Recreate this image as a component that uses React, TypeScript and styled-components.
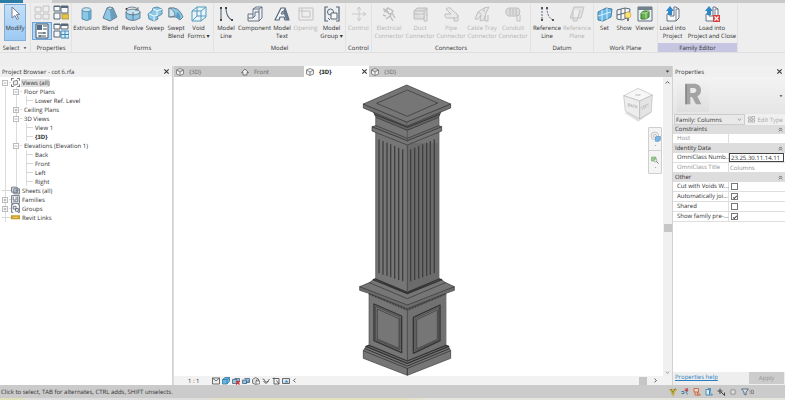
import React, { useState } from 'react';
import styled, { createGlobalStyle } from 'styled-components';

const GlobalStyle = createGlobalStyle`
  *, *::before, *::after { box-sizing: border-box; }
  body { margin: 0; background: #eeeeee; }
  body, button, input, select, table {
    font-family: "Open Sans", "Noto Sans", sans-serif;
    font-size: 6px;
    line-height: 8px;
    color: #303030;
    text-rendering: geometricPrecision;
  }
  button { padding: 0; border: 0; background: none; white-space: nowrap; }
  ul { margin: 0; padding: 0; list-style: none; }
  svg { display: block; flex: none; }
`;

const Window = styled.div`
  display: flex;
  flex-direction: column;
  min-height: 100vh;
  overflow: hidden;
`;

/* Ribbon */

const TabStrip = styled.div`
  display: flex;
  height: 3px;
  background: #c9c9c9;
`;
const FileTab = styled.div`
  width: 23px;
  background: #2b7da6;
`;
const ActiveRibbonTab = styled.div`
  width: 29px;
  background: #e6e6e6;
`;
const Ribbon = styled.header`
  display: flex;
  height: 50px;
  border-bottom: 1px solid #e0e0e0;
  background: #eeeeee;
`;
const PanelBox = styled.section<{ $width: number }>`
  display: flex;
  flex-direction: column;
  flex: none;
  width: ${p => p.$width}px;
  border-right: 1px solid #e2e2e2;
`;
const PanelTools = styled.div`
  display: flex;
  flex: 1;
  justify-content: center;
  padding-top: 1px;
`;
const PanelTitle = styled.h2<{ $accent?: boolean }>`
  display: flex;
  align-items: center;
  justify-content: center;
  gap: 4px;
  height: 9px;
  margin: 0;
  font-size: 6px;
  line-height: 8px;
  font-weight: 400;
  background: ${p => (p.$accent ? '#c6c5e2' : 'transparent')};
`;
const Tool = styled.button<{ $width: number; $pressed?: boolean }>`
  display: flex;
  flex-direction: column;
  align-items: center;
  flex: none;
  gap: 2px;
  width: ${p => p.$width}px;
  height: 37px;
  padding-top: 2px;
  box-shadow: ${p => (p.$pressed ? 'inset 0 0 0 1px #7fb0dc' : 'none')};
  background: ${p => (p.$pressed ? 'linear-gradient(#c5dff8, #9cc9f2)' : 'none')};
  &:disabled { color: #b4b4b4; }
  &:disabled svg { filter: grayscale(1); opacity: 0.35; }
`;
const ToolLabel = styled.span`
  text-align: center;
  white-space: pre-line;
`;
const SmallTools = styled.div`
  display: grid;
  grid-template-columns: 20px 18px;
  grid-template-rows: 18px 18px;
`;
const SmallTool = styled.button<{ $pressed?: boolean }>`
  display: flex;
  align-items: center;
  justify-content: center;
  border: 1px solid ${p => (p.$pressed ? '#6ea3d8' : 'transparent')};
  background: ${p => (p.$pressed ? '#b5d6f5' : 'none')};
  &:disabled svg { filter: grayscale(1); opacity: 0.35; }
`;
const OptionsBar = styled.div`
  height: 13px;
  background: #eeeeee;
`;

/* Work area */

const WorkArea = styled.main`
  display: grid;
  flex: 1;
  grid-template-columns: 172px minmax(0, 1fr) 112px;
  column-gap: 1px;
  background: #d2d2d2;
`;
const Browser = styled.aside`
  display: flex;
  flex-direction: column;
  background: #ffffff;
`;
const PaneTitle = styled.header`
  display: flex;
  align-items: center;
  justify-content: space-between;
  height: 11px;
  padding: 0 2px;
  background: #f0f0f0;
`;
const CloseButton = styled.button`
  display: flex;
  margin-left: auto;
`;
const Tree = styled.ul`
  padding: 1px 0 0 2px;
`;
const treeIndent = [0, 11, 24];
const trunk = (x: number) => `linear-gradient(#dcdcdc, #dcdcdc) ${x}px 0 / 1px 100% no-repeat`;
const TreeRow = styled.li<{ $depth: number }>`
  display: flex;
  align-items: center;
  height: 9px;
  padding-left: ${p => treeIndent[p.$depth]}px;
  &:not(:first-child) {
    background: ${p => [trunk(3), p.$depth > 0 && trunk(14), p.$depth > 1 && trunk(24)].filter(Boolean).join(', ')};
  }
`;
const Toggle = styled.button`
  display: flex;
  width: 7px;
`;
const Branch = styled.span<{ $width: number }>`
  width: ${p => p.$width}px;
  height: 1px;
  background: #d6d6d6;
`;
const TreeLabel = styled.span<{ $selected?: boolean; $bold?: boolean }>`
  margin-left: 1px;
  padding: 0 1px;
  white-space: nowrap;
  font-weight: ${p => (p.$bold ? 700 : 400)};
  background: ${p => (p.$selected ? '#dedede' : 'transparent')};
`;

const Viewer = styled.section`
  display: flex;
  flex-direction: column;
  min-width: 0;
  background: #ffffff;
  border-left: 1px solid #dddddd;
`;
const ViewTabs = styled.nav`
  display: flex;
  height: 11px;
  background: #c9c9c9;
`;
const ViewTab = styled.div<{ $active?: boolean }>`
  display: flex;
  align-items: center;
  width: 65px;
  padding: 0 1px 0 2px;
  background: ${p => (p.$active ? '#ffffff' : '#c9c9c9')};
  & > button:first-child {
    display: flex;
    align-items: center;
    gap: 5px;
    color: ${p => (p.$active ? '#222222' : '#666666')};
    font-weight: ${p => (p.$active ? 700 : 400)};
  }
`;
const TabMenu = styled.button`
  display: flex;
  align-items: center;
  margin-left: auto;
  padding-right: 2px;
`;
const Stage = styled.div`
  display: flex;
  flex: 1;
`;
const Canvas = styled.div`
  position: relative;
  display: flex;
  flex: 1;
  justify-content: center;
  align-items: flex-end;
  padding-right: 23px;
`;
const ViewCube = styled.div`
  position: absolute;
  top: 10px;
  right: 9px;
`;
const NavigationBar = styled.div`
  position: absolute;
  top: 50px;
  right: 1px;
  display: flex;
  flex-direction: column;
  width: 14px;
  height: 47px;
  border: 1px solid #cfcfcf;
  border-radius: 1px;
  background: #f4f4f4;
`;
const NavButton = styled.button`
  display: flex;
  flex: 1;
  flex-direction: column;
  align-items: center;
  justify-content: center;
  gap: 2px;
  & + & { border-top: 1px solid #d2d2d2; }
`;
const ScrollTrack = styled.div`
  display: flex;
  flex-direction: column;
  align-items: center;
  justify-content: space-between;
  width: 9px;
  padding: 3px 0 1px;
  background: #f0f0f0;
`;
const ScrollThumb = styled.div`
  width: 8px;
  height: 8px;
  background: #c6c6c6;
`;
const ViewBar = styled.footer`
  display: flex;
  align-items: center;
  gap: 2px;
  height: 9px;
  padding: 0 14px 0 14px;
  background: #f2f2f2;
`;
const Scale = styled.button`
  width: 17px;
  margin-right: 5px;
  text-align: left;
`;
const HorizontalScroll = styled.div`
  display: flex;
  align-items: center;
  gap: 6px;
  margin-left: auto;
`;

/* Properties */

const Properties = styled.aside`
  display: flex;
  flex-direction: column;
  background: #ffffff;
`;
const Preview = styled.button`
  display: flex;
  align-items: center;
  justify-content: space-between;
  height: 37px;
  padding: 0 2px 0 4px;
  background: linear-gradient(#f3f3f3, #e5e5e5);
`;
const PreviewTile = styled.span`
  display: flex;
  justify-content: center;
  padding: 3px 0;
  width: 32px;
  height: 33px;
  background: linear-gradient(#f2f2f2, #dfdfdf);
`;
const TypeRow = styled.div`
  display: flex;
  align-items: center;
  justify-content: space-between;
  height: 11px;
  padding: 0 2px 0 1px;
  background: #f0f0f0;
`;
const FamilyPicker = styled.label`
  display: grid;
  align-items: center;
  width: 71px;
  height: 11px;
  border: 1px solid #cccccc;
  background: #e9e9e9;
  & > * { grid-area: 1 / 1; }
  & > svg { justify-self: end; margin-right: 2px; pointer-events: none; }
`;
const FamilySelect = styled.select`
  width: 100%;
  height: 9px;
  padding: 0 1px;
  border: 0;
  appearance: none;
  background: none;
`;
const EditType = styled.button`
  display: flex;
  align-items: center;
  gap: 2px;
  &:disabled { color: #a8a8a8; }
`;
const PropertyTable = styled.table`
  width: 100%;
  table-layout: fixed;
  border-collapse: separate;
  border-spacing: 0;
  line-height: 7px;
`;
const LabelColumn = styled.col`
  width: 56px;
`;
const GroupCell = styled.th`
  height: 9px;
  padding: 0 2px;
  font-weight: 400;
  text-align: left;
  background: #dddddd;
`;
const GroupHeading = styled.span`
  display: flex;
  align-items: center;
  justify-content: space-between;
`;
const NameCell = styled.th<{ $dim?: boolean }>`
  height: 10px;
  padding: 0 0 0 4px;
  border-bottom: 1px solid #dedede;
  border-right: 1px solid #dedede;
  white-space: nowrap;
  text-align: left;
  font-weight: 400;
  color: ${p => (p.$dim ? '#909090' : '#303030')};
`;
const ValueCell = styled.td`
  height: 10px;
  padding: 0 1px 0 0;
  border-bottom: 1px solid #dedede;
`;
const ValueInput = styled.input<{ $focused?: boolean }>`
  display: block;
  width: 100%;
  height: 9px;
  padding: 0 1px;
  border: ${p => (p.$focused ? '1px solid #444444' : '0')};
  background: #ffffff;
  outline: none;
  &:disabled { color: #888888; }
`;
const Check = styled.input`
  display: grid;
  place-items: center;
  appearance: none;
  width: 7px;
  height: 7px;
  margin: 1px 2px;
  border: 1px solid #777777;
  background: #ffffff;
  &:checked::before {
    content: '';
    width: 4px;
    height: 2px;
    border: solid #444444;
    border-width: 0 0 1px 1px;
    transform: rotate(-45deg);
  }
`;
const PropertyFooter = styled.footer`
  display: flex;
  align-items: stretch;
  justify-content: space-between;
  height: 13px;
  margin-top: auto;
  padding: 0 1px 1px 2px;
  background: #eeeeee;
`;
const HelpLink = styled.a`
  color: #2b7fc0;
  line-height: 10px;
`;
const ApplyButton = styled.button`
  width: 35px;
  background: #cccccc;
  &:disabled { color: #929292; }
`;

/* Status bar */

const StatusBar = styled.footer`
  display: flex;
  align-items: center;
  height: 13px;
  padding: 0 31px 0 1px;
  background: #cbcbcb;
`;
const StatusTools = styled.div`
  display: flex;
  align-items: center;
  gap: 4px;
  margin-left: auto;
  & > button { display: flex; align-items: center; }
`;
const BottomEdge = styled.div`
  height: 2px;
  background: linear-gradient(90deg, #dfe2b8 0 24px, #dedede 24px 200px, #e3e2bd 230px 400px, #e6e6de 430px);
`;

/* Drawings */

const navy = '#56687a';
const blue = '#8cc8e6';
const pale = '#c9e4f1';

const art: Record<string, React.ReactNode> = {
  cursor: <path d="M5 1v11l3-2.5 2 4 1.5-.8-2-4 3-.4z" fill="#fff" stroke="#657487" strokeWidth=".9" />,
  extrusion: <><path d="M3 4v9q5 3 9 0V4z" fill={blue} stroke="#477f9e" strokeWidth=".8" /><path d="M9 4v10l3-1V4z" fill="#62aacd" /><ellipse cx="7.5" cy="3.7" rx="4.5" ry="2" fill={pale} stroke="#477f9e" strokeWidth=".8" /></>,
  blend: <><path d="M5 2 1 12l7 3 7-4-4-9-3-1z" fill={blue} stroke={navy} strokeWidth=".8" /><path d="m8 4 1 10 6-3-4-9z" fill="#6b9cb8" /><path d="m5 2 3 2 3-2-3-1z" fill={pale} stroke={navy} strokeWidth=".6" /></>,
  revolve: <><path d="M1 6v6q6 5 14 0V6q-7 5-14 0z" fill={blue} stroke={navy} strokeWidth=".8" /><ellipse cx="8" cy="6" rx="7" ry="2.8" fill={pale} stroke={navy} strokeWidth=".8" /><path d="M8 6v8M1 3q6-4 12 0m0-2v3h-3" fill="none" stroke={navy} strokeWidth=".8" /><circle cx="1.5" cy="3" r="1" fill="#333" /></>,
  sweep: <><path d="M5 5 6 2l4-1 5 2v5l-3 2h-2l1 3-4 2-5-2-1-5z" fill={blue} stroke="#4c86a5" strokeWidth=".9" /><path d="m6 3 4 2 5-2M10 5v4M2 8l5 2 4-1M7 10v5" fill="none" stroke="#e8f6fc" strokeWidth="1.1" /></>,
  swept: <><path d="M1 2q10-2 14 9l-3 3-4-3H1z" fill={blue} stroke={navy} strokeWidth=".8" /><path d="M1 2v9l6-1q0-6-6-8z" fill={pale} stroke={navy} strokeWidth=".7" /><path d="M8 11q0-4 2-5 3 3 2 8z" fill="#5e9fc4" /></>,
  void: <path d="M1 5v10h9l5-4V1H6L1 5h9v10m0-10 5-4M6 1v9h9M1 15l5-5" fill="#e9f5fb" stroke="#509bbf" strokeWidth="1" />,
  line: <><path d="M3 2v12M8 2q0 9 6 12" fill="none" stroke={navy} strokeWidth="1.1" /><path d="M2 1h2v2H2zM2 13h2v2H2zM7 1h2v2H7zM13 13h2v2h-2z" fill="#444" /></>,
  refline: <><path d="M3 2v12M8 2q0 9 6 12" fill="none" stroke={navy} strokeWidth="1" strokeDasharray="2 1" /><path d="M2 1h2v2H2zM2 13h2v2H2zM7 1h2v2H7zM13 13h2v2h-2z" fill="#555" /></>,
  component: <><path d="M1 8h5V3l3-2h6v11l-3 3H1z" fill="#eef0f2" stroke={navy} strokeWidth=".9" /><path d="M6 3h6v12M12 3l3-2M6 8v4H1m5 0 2-2V6h4" fill="none" stroke={navy} strokeWidth=".9" /></>,
  text: <><path d="m1 14 6-12h4l4 12h-4l-1-3H6l-1 3z" fill="#f8fafc" stroke={navy} strokeWidth="1.2" strokeLinejoin="round" /><path d="m7 8 1.5-3 1 3z" fill="#f0f0f0" stroke={navy} /><path d="m11 2 4 12h-3L9 5z" fill="#66798d" /></>,
  opening: <path d="M1 2h14v12H1zM4 5h8v6H4zM1 5h3M4 2v3" fill="#eee" stroke="#777" />,
  group: <><path d="M4 1H1v14h3M12 1h3v14h-3" fill="none" stroke={navy} strokeWidth="1.2" /><circle cx="6.5" cy="6" r="3" fill="#eee" stroke={navy} /><path d="M7 7h6v6H7zM4 12l2 2" fill="#f8f8f8" stroke={navy} /></>,
  control: <path d="M8 1v14M1 8h14M6 4l2-3 2 3M6 12l2 3 2-3M12 6l3 2-3 2" fill="none" stroke="#888" />,
  electrical: <path d="m2 3 4 1 2 4 3-1 3 5M3 6l4-4 5 3-3 5-4 3m4-3 3 5M2 9l3 1m-1-5 5 3" fill="none" stroke="#666" strokeWidth="1.4" />,
  duct: <><path d="m2 5 3-3h10v8l-3 3H2z" fill="#bbb" stroke="#666" /><path d="M2 5h10v8m0-8 3-3M2 8h10m0 2v5h3V9" fill="#ddd" stroke="#666" /></>,
  pipe: <path d="M3 3q4-3 6 1l5 4q2 3-1 4H4q-3-1-2-4h6zm8 8v4h4V9" fill="#ddd" stroke="#666" />,
  tray: <path d="m1 13 3-7 6-4 5-1-3 6-2 7-4 1 1-6-3 4zM4 6l3 2m3-6v4m1 4v5h3V9" fill="#ddd" stroke="#666" />,
  conduit: <><path d="M1 4q1-2 3-2h9q3 2 1 7l-3 1H3Q0 8 1 4z" fill="#bbb" stroke="#666" /><path d="M5 3v6m3-6v6m3-6v6m1 0v6h3V9" fill="none" stroke="#666" /></>,
  refplane: <path d="M5 1h10l-3 11H1zM4 4v11h4l3-11" fill="#ccc" stroke="#777" />,
  set: <><path d="m1 6 8-4 6 1-1 8-8 4-5-1z" fill="#6cb8e4" stroke="#39779c" strokeWidth=".9" /><path d="M5 4v11M10 2v11M1 10l13-4" stroke="#d8f0ff" fill="none" /></>,
  show: <><path d="m1 4 8-2 5 1-1 8-7 3-5-1z" fill="#f7f7f7" stroke={navy} /><path d="M5 3v10M9 2v10M1 9l12-3" stroke={navy} fill="none" /><circle cx="12" cy="9" r="3" fill="#ffe471" stroke="#c7a13a" strokeWidth=".6" /><path d="M11 12h2v3h-2z" fill="#777" /></>,
  viewer: <><path d="M1 1h14v14H1z" fill="#edf0f2" stroke="#607080" /><path d="M1 1h14v3H1z" fill="#71808d" /><path d="m4 7 3-2h5v6l-3 2H4z" fill="#66af4d" stroke="#397832" /><path d="M4 7h5v6m0-6 3-2" fill="none" stroke="#d9f5cb" strokeWidth=".7" /></>,
  load: <><path d="M2 8v7h9l3-3V3l-3-2H9v9H5V7z" fill="#f8f8f8" stroke={navy} strokeWidth=".9" /><path d="M14 3h-3v12" fill="none" stroke={navy} strokeWidth=".8" /><path d="M3 9V5H1l4-5 4 5H7v4z" fill="#2e87c9" /></>,
  loadclose: <><path d="M2 8v7h9l3-3V3l-3-2H9v9H5V7z" fill="#f8f8f8" stroke={navy} strokeWidth=".9" /><path d="M14 3h-3v12" fill="none" stroke={navy} strokeWidth=".8" /><path d="M3 9V5H1l4-5 4 5H7v4z" fill="#2e87c9" /><path d="M9 9h7v7H9z" fill="#dc3e3e" /><path d="m10.500 10.500 4 4m0-4-4 4" stroke="#fff" strokeWidth="1.200" /></>,
  category: <path d="M1 2h6v5H1zm8-1h6v6H9zM1 9h6v5H1zm8 0h6v5H9z" fill="#eee" stroke="#777" />,
  types: <><path d="M1 1h6v5H1zM8 1h7v7H8zM1 8h6v6H1z" fill="#f8f8f8" stroke={navy} /><path d="M8 1h7v2H8zM1 1h6v1H1z" fill={navy} /><path d="M9 9h7v5H9z" fill="#e5c44b" stroke="#9d842e" strokeWidth=".7" /></>,
  palette: <><path d="M2 1h12v14H2z" fill="#fff" stroke="#3f5262" /><path d="M3 2h5v5H3z" fill="#536d87" /><path d="M9 3h4M9 6h4M4 10h8M4 13h8M10 9v2M6 12v2" stroke="#3f5262" /></>,
  familytypes: <><path d="M1 1h6v5H1zM8 1h7v5H8zM1 8h6v6H1z" fill="#f8f8f8" stroke={navy} /><path d="M8 1h7v2H8zM1 1h6v1H1z" fill={navy} /><path d="M8 8h8v7H8zM8 11.500h8M12 8v7" fill="#d6eefa" stroke="#3a8abb" /></>,
  close: <path d="m3 3 10 10M13 3 3 13" stroke="#333" strokeWidth="2.400" />,
  down: <path d="M2 5h12l-6 7z" fill="#444" />,
  dot: <path d="M3 5h10l-5 6z" fill="#999" />,
  chevron: <path d="m3 5 5 6 5-6" fill="none" stroke="#666" strokeWidth="1.800" />,
  up: <path d="m2 11 6-6 6 6" fill="none" stroke="#333" strokeWidth="2.500" />,
  right: <path d="m5 2 6 6-6 6" fill="none" stroke="#333" strokeWidth="2.500" />,
  left: <path d="M11 2 5 8l6 6" fill="none" stroke="#333" strokeWidth="2.500" />,
  collapse: <path d="m3 8 5-5 5 5M3 14l5-5 5 5" fill="none" stroke="#333" strokeWidth="2.200" />,
  plus: <path d="M1 1h14v14H1zM4 8h8M8 4v8" fill="#fff" stroke="#999" strokeWidth="2" />,
  minus: <path d="M1 1h14v14H1zM4 8h8" fill="#fff" stroke="#999" strokeWidth="2" />,
  views: <><path d="M1 5V1h4M11 1h4v4M15 11v4h-4M5 15H1v-4" fill="none" stroke="#777" strokeWidth="1.800" /><path d="m4 6 7-2 1 7-7 2z" fill="#eee" stroke="#777" strokeWidth="1.500" /></>,
  sheets: <><path d="M1 2h10v9H1zM5 5h10v9H5z" fill="#d6dbe1" stroke="#687480" strokeWidth="1.600" /><path d="M8 8h5M8 11h5" stroke="#687480" strokeWidth="1.500" /></>,
  families: <path d="M1 1h14v14H1zM4 3v6h5V3M12 3v9H4" fill="#eee" stroke="#667380" strokeWidth="1.600" />,
  groups: <path d="M4 1H1v14h3M12 1h3v14h-3M4 4h5v5H4zM8 8h5v5H8z" fill="#eee" stroke="#667380" strokeWidth="1.600" />,
  link: <><path d="M0 4h9v7H0zM7 4h9v7H7z" fill="#c79a20" /><path d="M3 7.500h10" stroke="#f1d779" strokeWidth="1.800" /></>,
  cube: <path d="m1 4 7-3 7 3v8l-7 3-7-3zM1 4l7 4 7-4M8 8v7" fill="#f2f2f2" stroke="#777" strokeWidth="1.700" />,
  elevation: <path d="m1 9 7-7 7 7h-3v5H4V9z" fill="#eee" stroke="#666" strokeWidth="1.700" />,
  detail: <path d="M1 2h14v12H1zM1 2l7 6 7-6" fill="#eee" stroke="#555" strokeWidth="1.700" />,
  style: <path d="m1 5 5-4h9v8l-5 5H1zm0 0h9v9m0-9 5-4" fill="#69b6e4" stroke="#2d739b" strokeWidth="1.500" />,
  sun: <><path d="M1 5h9v8H1zM5 3h10v7h-5" fill="#9cc6e2" stroke="#48657a" strokeWidth="1.600" /><path d="m8 8 7 7m0-7-7 7" stroke="#d02f2f" strokeWidth="2.600" /></>,
  shadow: <><path d="M1 6h8v7H1zM5 3h10v8H9" fill="#90c1df" stroke="#48657a" strokeWidth="1.600" /><path d="m8 14 7-8" stroke="#426fa1" strokeWidth="1.500" /></>,
  lock: <><path d="m1 5 6-4 6 3v8l-6 3-6-3z" fill="#ddd" stroke="#555" strokeWidth="1.500" /><path d="M8 8h7v6H8zM9 8V6h5v2" fill="#fff" stroke="#555" strokeWidth="1.300" /></>,
  glasses: <path d="M1 4q5 0 5 5 4 3 6-1l3-4M3 8q5 9 10 0" fill="none" stroke="#555" strokeWidth="1.700" />,
  crop: <path d="M1 3h13v11H4V1M9 7l5 7" fill="none" stroke="#555" strokeWidth="1.800" />,
  crop2: <><path d="M1 3h14v10H1z" fill="#d8e5f0" stroke="#555" strokeWidth="1.700" /><path d="m5 11 4-5 4 5" fill="#4a88b7" /></>,
  warning: <><path d="M1 3h14l-4 6-2 6H7L5 9z" fill="#f3d63c" stroke="#a08a22" /><path d="m4 2 5 10M13 1 8 8" stroke="#555" strokeWidth="1.600" /></>,
  selectlink: <><path d="M1 7h5v4H1M7 4l6 2-3 2 3 5" fill="none" stroke="#4580a2" strokeWidth="2" /><path d="m9 1 5 5m0-5L9 6" stroke="#d04343" strokeWidth="2.400" /></>,
  underlay: <path d="M2 1h9v7H2zM4 8v6h7M9 8l6 6H9z" fill="#e9d8cd" stroke="#ca6338" strokeWidth="1.800" />,
  pin: <path d="M2 3h7v11H2zM6 1h5v6M9 8l6 6H9z" fill="#dcecf7" stroke="#3b83af" strokeWidth="1.800" />,
  drag: <path d="M6 1v11M1 6h10M8 8l7 7V9" fill="none" stroke="#444" strokeWidth="2" />,
  circle: <circle cx="8" cy="8" r="5" fill="#ddd" stroke="#aaa" strokeWidth="3" />,
  filter: <path d="M1 2h14L10 8v6l-4-2V8z" fill="#d8e1ea" stroke="#466078" strokeWidth="1.700" />,
  wheel: <><circle cx="7" cy="7" r="5.500" fill="#f8f8f8" stroke="#aaa" /><circle cx="7" cy="7" r="2.500" fill="#eee" stroke="#aaa" /><path d="m8 9 2-1h5v5l-2 2H8z" fill="#7db5e5" stroke="#5891c2" /></>,
  zoom: <><path d="M1 2h9v8H1z" fill="#9cc993" stroke="#689d60" /><circle cx="9" cy="9" r="3" fill="#e3f0df" stroke="#618c5b" /><path d="m11 11 4 4" stroke="#777" strokeWidth="2" /></>,
};

const Icon = ({ name, size = 16 }: { name: string; size?: number }) => (
  <svg width={size} height={size} viewBox="0 0 16 16" aria-hidden="true">{art[name]}</svg>
);

const leftFlutes = [87, 99, 111, 122, 134, 146, 158];
const rightFlutes = [182, 194, 206, 218, 230, 241, 253];

const ColumnDrawing = () => (
  <svg width="115" height="296" viewBox="0 0 345 888" role="img" aria-label="Fluted column">
    <g fill="#767676" stroke="#343434" strokeWidth="2" strokeLinejoin="round">
      <path d="M77 145v465l95 30 95-30V145z" stroke="#555" />
      <path d="M172 190h95v420l-95 30z" fill="#6b6b6b" stroke="none" />
      {leftFlutes.map((x, i) => (
        <path key={x} d={`M${x} ${178 + i * 5}V${580 + i * 4}`} stroke="#3f3f3f" strokeWidth="4" />
      ))}
      {rightFlutes.map((x, i) => (
        <path key={x} d={`M${x} ${208 - i * 5}V${604 - i * 4}`} stroke="#3f3f3f" strokeWidth="4" />
      ))}
      <path d="M172 193v440" stroke="#4e4e4e" strokeWidth="3" />
      <path d="M77 112v35l95 39 95-39v-35l-95 38z" stroke="#555" />
      <path d="M66 140v13l106 42 103-42v-13l-103 42z" />
      <path d="M66 140l12-3 94 38 94-38 9 3-103 42z" fill="#707070" />
      <path d="M68 92l10 20 94 39 94-39 8-20-102 40z" fill="#626262" />
      <path d="M73 103l99 39 98-39" fill="none" strokeWidth="3" />
      <path d="M40 72v12l130 55 132-55V72l-132 54z" fill="#707070" />
      <path d="M170 15l132 57-132 54L40 72z" />
      <path d="M172 30l91 39-91 40-92-39z" />
      <path d="M170 126v13M172 150v35" fill="none" stroke="#4b4b4b" />

      <path d="M57 636v170l115 44 116-44V636l-116 45z" stroke="#555" />
      <path d="M172 681l116-45v170l-116 44z" fill="#717171" stroke="none" />
      <path d="M57 641l115 49 116-49" fill="none" strokeWidth="5" strokeDasharray="3 2" />
      <path d="M29 620v11l28 9 115 46 116-46 25-9v-11l-141 48z" fill="#6c6c6c" />
      <path d="M29 620l31-13 112 44 113-44 28 13-141 55z" />
      <path d="M58 608l14-10 100 42 101-42 13 10-114 48z" />
      <path d="M70 599l7-2 95 40 95-40 8 2-103 42z" strokeWidth="4" />

      <path d="M72 672l83 36v110l-83-36z" strokeWidth="4" />
      <path d="M82 687l65 29v89l-65-28z" />
      <path d="M77 679l73 32v99l-73-31z" fill="none" />
      <path d="M190 712l80-37v107l-80 38z" strokeWidth="4" />
      <path d="M200 719l62-29v88l-62 29z" />
      <path d="M195 716l71-34v98l-71 33z" fill="none" />
      <path d="M172 684v166" stroke="#4e4e4e" strokeWidth="3" />

      <path d="M40 812v23l132 51 130-51v-23l-130 53z" />
      <path d="M40 812l8-13 124 50 123-50 7 13-130 53z" />
      <path d="M48 799l9-3 115 47 116-47 8 3-124 51z" strokeWidth="4" />
      <path d="M45 806l127 52 126-52M172 865v21" fill="none" strokeWidth="3" />
    </g>
  </svg>
);

const CubeDrawing = () => (
  <svg width="32" height="36" viewBox="0 0 96 108" role="img" aria-label="View cube">
    <path d="M7 78l42 26 41-28-38-12z" fill="#e1e1e1" />
    <g stroke="#aaaaaa" strokeWidth="1.500" strokeLinejoin="round">
      <path d="M48 4l43 20-38 18L5 26z" fill="#f7f7f7" />
      <path d="M5 26l48 16v54L10 72z" fill="#ededed" />
      <path d="M53 42l38-18-3 50-35 22z" fill="#e4e4e4" />
    </g>
    <g fontFamily="Open Sans, sans-serif" fontSize="12" fill="#8c8c8c">
      <text x="0" y="0" transform="translate(16 57) rotate(14)">BACK</text>
      <text x="0" y="0" transform="translate(59 68) rotate(-24)">LEFT</text>
      <text x="40" y="26" fontSize="8">TOP</text>
    </g>
  </svg>
);

const FamilyLogo = () => (
  <svg width="22" height="25" viewBox="0 0 66 75" aria-hidden="true">
    <path d="M10 5h29q18 2 18 20 0 13-11 18l12 24H42L30 45h-5v22H10z" fill="#a3a3a3" />
    <path d="M25 18h11q7 1 7 7t-7 8H25z" fill="#e9e9e9" />
    <path d="M10 5l5 4v58h-5z" fill="#888888" />
  </svg>
);

/* Data */

type ToolSpec = { icon: string; label: string; w: number; disabled?: boolean };
type PanelSpec = { title: string; width: number; accent?: boolean; tools: ToolSpec[] };

const panels: PanelSpec[] = [
  { title: 'Forms', width: 142, tools: [
    { icon: 'extrusion', label: 'Extrusion', w: 25 },
    { icon: 'blend', label: 'Blend', w: 22 },
    { icon: 'revolve', label: 'Revolve', w: 23 },
    { icon: 'sweep', label: 'Sweep', w: 22 },
    { icon: 'swept', label: 'Swept\nBlend', w: 20 },
    { icon: 'void', label: 'Void\nForms ▾', w: 25 },
  ] },
  { title: 'Model', width: 132, tools: [
    { icon: 'line', label: 'Model\nLine', w: 24 },
    { icon: 'component', label: 'Component', w: 33 },
    { icon: 'text', label: 'Model\nText', w: 22 },
    { icon: 'opening', label: 'Opening', w: 25, disabled: true },
    { icon: 'group', label: 'Model\nGroup ▾', w: 27 },
  ] },
  { title: 'Control', width: 26, tools: [{ icon: 'control', label: 'Control', w: 25, disabled: true }] },
  { title: 'Connectors', width: 159, tools: [
    { icon: 'electrical', label: 'Electrical\nConnector', w: 31, disabled: true },
    { icon: 'duct', label: 'Duct\nConnector', w: 31, disabled: true },
    { icon: 'pipe', label: 'Pipe\nConnector', w: 31, disabled: true },
    { icon: 'tray', label: 'Cable Tray\nConnector', w: 31, disabled: true },
    { icon: 'conduit', label: 'Conduit\nConnector', w: 31, disabled: true },
  ] },
  { title: 'Datum', width: 63, tools: [
    { icon: 'refline', label: 'Reference\nLine', w: 30 },
    { icon: 'refplane', label: 'Reference\nPlane', w: 30, disabled: true },
  ] },
  { title: 'Work Plane', width: 64, tools: [
    { icon: 'set', label: 'Set', w: 19 },
    { icon: 'show', label: 'Show', w: 20 },
    { icon: 'viewer', label: 'Viewer', w: 22 },
  ] },
  { title: 'Family Editor', width: 80, accent: true, tools: [
    { icon: 'load', label: 'Load into\nProject', w: 29 },
    { icon: 'loadclose', label: 'Load into\nProject and Close', w: 50 },
  ] },
];

type Node = { label: string; depth: number; toggle?: 'plus' | 'minus'; icon?: string; selected?: boolean; bold?: boolean };

const nodes: Node[] = [
  { label: 'Views (all)', depth: 0, toggle: 'minus', icon: 'views', selected: true },
  { label: 'Floor Plans', depth: 1, toggle: 'minus' },
  { label: 'Lower Ref. Level', depth: 2 },
  { label: 'Ceiling Plans', depth: 1, toggle: 'plus' },
  { label: '3D Views', depth: 1, toggle: 'minus' },
  { label: 'View 1', depth: 2 },
  { label: '{3D}', depth: 2, bold: true },
  { label: 'Elevations (Elevation 1)', depth: 1, toggle: 'minus' },
  { label: 'Back', depth: 2 },
  { label: 'Front', depth: 2 },
  { label: 'Left', depth: 2 },
  { label: 'Right', depth: 2 },
  { label: 'Sheets (all)', depth: 0, icon: 'sheets' },
  { label: 'Families', depth: 0, toggle: 'plus', icon: 'families' },
  { label: 'Groups', depth: 0, toggle: 'plus', icon: 'groups' },
  { label: 'Revit Links', depth: 0, icon: 'link' },
];

const RibbonPanel = ({ panel }: { panel: PanelSpec }) => (
  <PanelBox $width={panel.width}>
    <PanelTools>
      {panel.tools.map(t => (
        <Tool key={t.label} $width={t.w} disabled={t.disabled}>
          <Icon name={t.icon} />
          <ToolLabel>{t.label}</ToolLabel>
        </Tool>
      ))}
    </PanelTools>
    <PanelTitle $accent={panel.accent}>{panel.title}</PanelTitle>
  </PanelBox>
);

const TreeItem = ({ node }: { node: Node }) => (
  <TreeRow $depth={node.depth}>
    {node.toggle ? (
      <Toggle aria-label={`Toggle ${node.label}`}><Icon name={node.toggle} size={6} /></Toggle>
    ) : (
      <Branch $width={node.depth === 0 ? 9 : 7} />
    )}
    {node.toggle && <Branch $width={2} />}
    {node.icon && <Icon name={node.icon} size={9} />}
    <TreeLabel $selected={node.selected} $bold={node.bold}>{node.label}</TreeLabel>
  </TreeRow>
);

const Group = ({ title }: { title: string }) => (
  <tr>
    <GroupCell colSpan={2} scope="colgroup">
      <GroupHeading>{title}<Icon name="collapse" size={5} /></GroupHeading>
    </GroupCell>
  </tr>
);

const TextProperty = ({ id, name, initial, disabled, focused }: {
  id: string; name: string; initial: string; disabled?: boolean; focused?: boolean;
}) => {
  const [value, setValue] = useState(initial);
  return (
    <tr>
      <NameCell scope="row" $dim={disabled}><label htmlFor={id}>{name}</label></NameCell>
      <ValueCell>
        <ValueInput id={id} value={value} disabled={disabled} $focused={focused} onChange={e => setValue(e.target.value)} />
      </ValueCell>
    </tr>
  );
};

const CheckProperty = ({ id, name, on }: { id: string; name: string; on?: boolean }) => (
  <tr>
    <NameCell scope="row"><label htmlFor={id}>{name}</label></NameCell>
    <ValueCell><Check id={id} type="checkbox" defaultChecked={on} /></ValueCell>
  </tr>
);

const viewTabs = [
  { icon: 'cube', label: '{3D}' },
  { icon: 'elevation', label: 'Front' },
  { icon: 'cube', label: '{3D}', active: true },
  { icon: 'cube', label: '{3D}' },
];
const viewControls = ['detail', 'style', 'sun', 'shadow', 'lock', 'glasses', 'crop', 'crop2'];
const statusIcons = ['warning', 'selectlink', 'underlay', 'pin', 'drag', 'circle'];

export default function App() {
  return (
    <Window>
      <GlobalStyle />
      <TabStrip><FileTab /><ActiveRibbonTab /></TabStrip>
      <Ribbon>
        <PanelBox $width={31}>
          <PanelTools>
            <Tool $width={22} $pressed>
              <Icon name="cursor" />
              <ToolLabel>Modify</ToolLabel>
            </Tool>
          </PanelTools>
          <PanelTitle>Select <Icon name="down" size={4} /></PanelTitle>
        </PanelBox>
        <PanelBox $width={41}>
          <PanelTools>
            <SmallTools>
              <SmallTool disabled aria-label="Family category"><Icon name="category" /></SmallTool>
              <SmallTool aria-label="Family types"><Icon name="types" /></SmallTool>
              <SmallTool $pressed aria-label="Properties"><Icon name="palette" /></SmallTool>
              <SmallTool aria-label="Type grid"><Icon name="familytypes" /></SmallTool>
            </SmallTools>
          </PanelTools>
          <PanelTitle>Properties</PanelTitle>
        </PanelBox>
        {panels.map(p => <RibbonPanel key={p.title} panel={p} />)}
      </Ribbon>
      <OptionsBar />

      <WorkArea>
        <Browser>
          <PaneTitle>
            Project Browser - cot 6.rfa
            <CloseButton aria-label="Close browser"><Icon name="close" size={7} /></CloseButton>
          </PaneTitle>
          <Tree>{nodes.map(n => <TreeItem key={n.label} node={n} />)}</Tree>
        </Browser>

        <Viewer>
          <ViewTabs>
            {viewTabs.map((t, i) => (
              <ViewTab key={i} $active={t.active}>
                <button><Icon name={t.icon} size={8} />{t.label}</button>
                {t.active && <CloseButton aria-label="Close view"><Icon name="close" size={7} /></CloseButton>}
              </ViewTab>
            ))}
            <TabMenu aria-label="View list"><Icon name="down" size={5} /></TabMenu>
          </ViewTabs>
          <Stage>
            <Canvas>
              <ColumnDrawing />
              <ViewCube><CubeDrawing /></ViewCube>
              <NavigationBar>
                <NavButton aria-label="Steering wheel"><Icon name="wheel" size={11} /><Icon name="dot" size={3} /></NavButton>
                <NavButton aria-label="Zoom region"><Icon name="zoom" size={8} /><Icon name="dot" size={3} /></NavButton>
              </NavigationBar>
            </Canvas>
            <ScrollTrack>
              <Icon name="up" size={5} />
              <ScrollThumb />
              <Icon name="chevron" size={5} />
            </ScrollTrack>
          </Stage>
          <ViewBar>
            <Scale>1 : 1</Scale>
            {viewControls.map(n => <Icon key={n} name={n} size={8} />)}
            <Icon name="left" size={5} />
            <HorizontalScroll><ScrollThumb /><Icon name="right" size={5} /></HorizontalScroll>
          </ViewBar>
        </Viewer>

        <Properties>
          <PaneTitle>
            Properties
            <CloseButton aria-label="Close properties"><Icon name="close" size={7} /></CloseButton>
          </PaneTitle>
          <Preview aria-label="Family type">
            <PreviewTile><FamilyLogo /></PreviewTile>
            <Icon name="down" size={4} />
          </Preview>
          <TypeRow>
            <FamilyPicker>
              <FamilySelect aria-label="Family"><option>Family: Columns</option></FamilySelect>
              <Icon name="chevron" size={5} />
            </FamilyPicker>
            <EditType disabled><Icon name="category" size={7} />Edit Type</EditType>
          </TypeRow>
          <PropertyTable>
            <colgroup><LabelColumn /><col /></colgroup>
            <tbody>
              <Group title="Constraints" />
              <TextProperty id="host" name="Host" initial="" disabled />
              <Group title="Identity Data" />
              <TextProperty id="omni-number" name="OmniClass Numb..." initial="23.25.30.11.14.11" focused />
              <TextProperty id="omni-title" name="OmniClass Title" initial="Columns" disabled />
              <Group title="Other" />
              <CheckProperty id="cut-voids" name="Cut with Voids W..." />
              <CheckProperty id="auto-join" name="Automatically joi..." on />
              <CheckProperty id="shared" name="Shared" />
              <CheckProperty id="show-pre" name="Show family pre-..." on />
            </tbody>
          </PropertyTable>
          <PropertyFooter>
            <HelpLink href="#help">Properties help</HelpLink>
            <ApplyButton disabled>Apply</ApplyButton>
          </PropertyFooter>
        </Properties>
      </WorkArea>

      <StatusBar>
        Click to select, TAB for alternates, CTRL adds, SHIFT unselects.
        <StatusTools>
          {statusIcons.map(n => <button key={n} aria-label={n}><Icon name={n} size={8} /></button>)}
          <button><Icon name="filter" size={8} />:0</button>
        </StatusTools>
      </StatusBar>
      <BottomEdge />
    </Window>
  );
}
